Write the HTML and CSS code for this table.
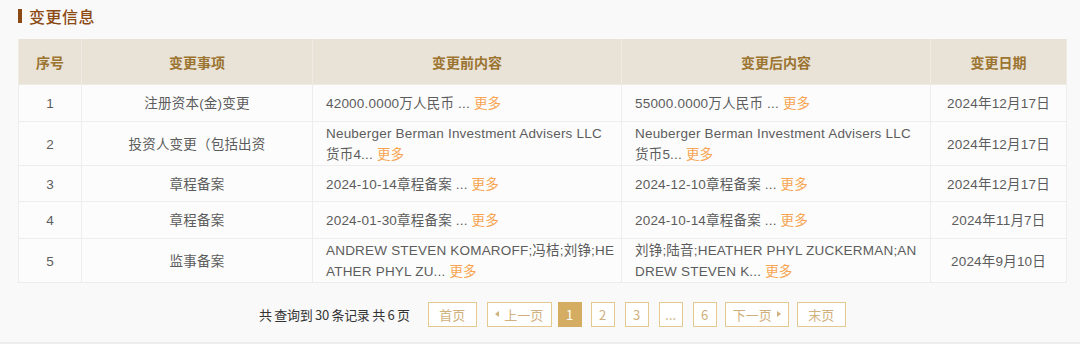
FILE: index.html
```html
<!DOCTYPE html>
<html lang="zh-CN">
<head>
<meta charset="utf-8">
<link rel="stylesheet" href="styles.css">
</head>
<body>
<div class="page">
  <h2 class="title"><span class="bar"></span>变更信息</h2>
  <table class="tbl">
    <colgroup>
      <col class="c1"><col class="c2"><col class="c3"><col class="c4"><col class="c5">
    </colgroup>
    <thead>
      <tr><th>序号</th><th>变更事项</th><th>变更前内容</th><th>变更后内容</th><th>变更日期</th></tr>
    </thead>
    <tbody>
      <tr>
        <td class="ctr">1</td><td class="ctr">注册资本(金)变更</td>
        <td class="txt">42000.0000万人民币 ... <a class="more">更多</a></td>
        <td class="txt">55000.0000万人民币 ... <a class="more">更多</a></td>
        <td class="ctr">2024年12月17日</td>
      </tr>
      <tr>
        <td class="ctr">2</td><td class="ctr">投资人变更（包括出资</td>
        <td class="txt">Neuberger Berman Investment Advisers LLC<br>货币4... <a class="more">更多</a></td>
        <td class="txt">Neuberger Berman Investment Advisers LLC<br>货币5... <a class="more">更多</a></td>
        <td class="ctr">2024年12月17日</td>
      </tr>
      <tr class="short">
        <td class="ctr">3</td><td class="ctr">章程备案</td>
        <td class="txt">2024-10-14章程备案 ... <a class="more">更多</a></td>
        <td class="txt">2024-12-10章程备案 ... <a class="more">更多</a></td>
        <td class="ctr">2024年12月17日</td>
      </tr>
      <tr>
        <td class="ctr">4</td><td class="ctr">章程备案</td>
        <td class="txt">2024-01-30章程备案 ... <a class="more">更多</a></td>
        <td class="txt">2024-10-14章程备案 ... <a class="more">更多</a></td>
        <td class="ctr">2024年11月7日</td>
      </tr>
      <tr>
        <td class="ctr">5</td><td class="ctr">监事备案</td>
        <td class="txt">ANDREW STEVEN KOMAROFF;冯桔;刘铮;HE<br>ATHER PHYL ZU... <a class="more">更多</a></td>
        <td class="txt">刘铮;陆音;HEATHER PHYL ZUCKERMAN;AN<br>DREW STEVEN K... <a class="more">更多</a></td>
        <td class="ctr">2024年9月10日</td>
      </tr>
    </tbody>
  </table>
  <div class="pager">
    <span class="info">共 查询到 30 条记录 共 6 页</span>
    <a class="pbtn w-first">首页</a>
    <a class="pbtn w-prev"><span class="tri-l"></span>上一页</a>
    <a class="pbtn num n1 active">1</a>
    <a class="pbtn num">2</a>
    <a class="pbtn num">3</a>
    <a class="pbtn num">...</a>
    <a class="pbtn num n6">6</a>
    <a class="pbtn w-next">下一页<span class="tri-r"></span></a>
    <a class="pbtn w-last">末页</a>
  </div>
</div>
<div class="footer"></div>
</body>
</html>
```
FILE: styles.css
```css
html, body {
  margin: 0;
  padding: 0;
  background: #fff;
}
body {
  font-family: "Liberation Sans", "Noto Sans CJK SC", sans-serif;
  color: #555;
}
.page {
  background: #faf9f9;
  padding: 5px 14px 15px 18px;
  border-bottom: 2px solid #efedec;
}
.title {
  margin: 0;
  height: 22px;
  display: flex;
  align-items: center;
  font-family: "Noto Sans CJK SC", sans-serif;
  font-size: 16px;
  font-weight: 500;
  color: #8b4a13;
  letter-spacing: 0.5px;
}
.bar {
  display: inline-block;
  width: 4px;
  height: 14px;
  background: #8b4a13;
  margin-right: 7px;
}
.tbl {
  margin-top: 12px;
  width: 1048px;
  border-collapse: collapse;
  table-layout: fixed;
  background: #fcfcfc;
  font-size: 13.5px;
}
.c1 { width: 63px; }
.c2 { width: 231px; }
.c3 { width: 309px; }
.c4 { width: 309px; }
.c5 { width: 136px; }
.tbl th {
  background: #e9e2d6;
  color: #9b7430;
  font-family: "Noto Sans CJK SC", sans-serif;
  font-weight: 700;
  height: 45px;
  padding: 0;
  border: 1px solid #efebe4;
  border-top: none;
  font-size: 14px;
}
.tbl td {
  border: 1px solid #ededed;
  height: 35px;
  padding: 1px 12px 0 13px;
  line-height: 21px;
  vertical-align: middle;
  color: #5c5c5c;
  letter-spacing: 0.2px;
}
.tbl tr.short td {
  height: 34px;
}
.tbl td.ctr {
  text-align: center;
  padding-left: 4px;
  padding-right: 4px;
}
.tbl td.txt {
  text-align: left;
  white-space: nowrap;
}
.more {
  color: #f7a552;
}
.pager {
  display: flex;
  align-items: center;
  margin-top: 18px;
  padding-left: 241px;
  height: 26px;
  font-family: "Noto Sans CJK SC", sans-serif;
  font-size: 13px;
}
.info {
  color: #333;
  margin-right: 18px;
  letter-spacing: -0.3px;
}
.pbtn {
  box-sizing: border-box;
  height: 25px;
  border: 1px solid #e3c98f;
  color: #d0b07c;
  display: flex;
  align-items: center;
  justify-content: center;
  margin-right: 10px;
  background: #fff;
}
.w-first, .w-last { width: 49px; }
.w-prev { width: 65px; margin-right: 6px; }
.w-next { width: 64px; margin-right: 8px; }
.num { width: 24px; margin-right: 10px; }
.num.n1 { margin-right: 9px; }
.num.n6 { margin-right: 8px; }
.pbtn.active {
  background: #d4ad62;
  border-color: #d4ad62;
  color: #fff;
}
.tri-l {
  width: 0; height: 0;
  border-top: 3.5px solid transparent;
  border-bottom: 3.5px solid transparent;
  border-right: 4px solid #d0b07c;
  margin-right: 5px;
}
.tri-r {
  width: 0; height: 0;
  border-top: 3.5px solid transparent;
  border-bottom: 3.5px solid transparent;
  border-left: 4px solid #d0b07c;
  margin-left: 5px;
}
.footer {
  height: 20px;
  background: #fff;
}
```
